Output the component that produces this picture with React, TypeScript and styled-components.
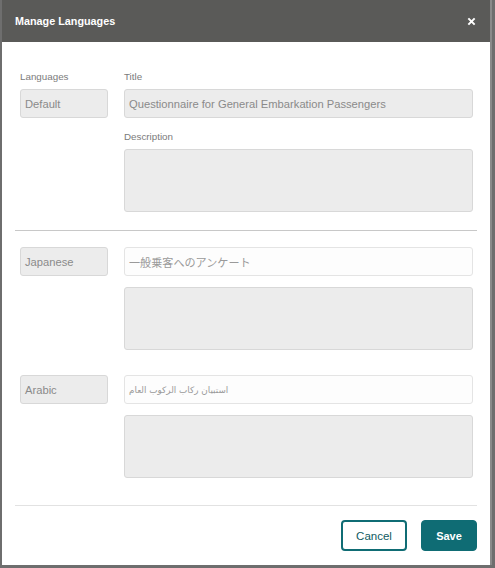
import styled, { createGlobalStyle } from "styled-components";

const GlobalStyle = createGlobalStyle`
  html, body {
    margin: 0;
    padding: 0;
    background: #6e6e6e;
    font-family: "Liberation Sans", Arial, "Noto Sans CJK JP", sans-serif;
  }
`;

interface Translation {
  language: string;
  title: string;
  rtl?: boolean;
}

const translations: Translation[] = [
  { language: "Japanese", title: "一般乗客へのアンケート" },
  { language: "Arabic", title: "استبيان ركاب الركوب العام", rtl: true },
];

const Modal = styled.div`
  width: 488px;
  height: 565px;
  margin-left: 2px;
  background: #fff;
  border-right: 2px solid #8a8a8a;
  display: flex;
  flex-direction: column;
`;

const Header = styled.div`
  height: 42px;
  flex-shrink: 0;
  background: #5a5a58;
  display: flex;
  align-items: center;
  justify-content: space-between;
  padding: 0 14px 0 13px;
  color: #fff;
`;

const HeaderTitle = styled.h2`
  margin: 0;
  font-size: 10.8px;
  font-weight: bold;
`;

const CloseButton = styled.button`
  border: none;
  background: none;
  color: #fff;
  padding: 0;
  display: flex;
  cursor: pointer;
`;

const Body = styled.div`
  padding: 29px 13px 0 13px;
  flex: 1;
`;

const LanguageRow = styled.div<{ $first?: boolean }>`
  display: grid;
  grid-template-columns: 88px 349px;
  column-gap: 16px;
  padding: ${({ $first }) => ($first ? "0 0 18px 5px" : "0 0 25px 5px")};
`;

const Section = styled.div`
  display: flex;
  flex-direction: column;
`;

const Label = styled.label<{ $top?: number }>`
  font-size: 9.8px;
  color: #7b7b7b;
  margin-top: ${({ $top }) => $top ?? 0}px;
  margin-bottom: 7px;
  line-height: 11px;
`;

const Field = styled.div<{ $editable?: boolean }>`
  box-sizing: border-box;
  height: 29px;
  border: 1px solid ${({ $editable }) => ($editable ? "#e4e4e4" : "#d8d8d8")};
  border-radius: 3px;
  background: ${({ $editable }) => ($editable ? "#fdfdfd" : "#ececec")};
  color: #8a8a8a;
  font-size: 11.2px;
  display: flex;
  align-items: center;
  padding: 0 4px;
  white-space: nowrap;
  overflow: hidden;
`;

const ArabicText = styled.span`
  font-family: "DejaVu Sans", "Noto Sans", sans-serif;
  font-size: 8.8px;
  color: #9a9a9a;
`;

const JapaneseText = styled.span`
  font-family: "Noto Sans CJK JP", sans-serif;
  font-size: 11.1px;
  color: #9a9a9a;
`;

const TextArea = styled.div<{ $gap: number }>`
  box-sizing: border-box;
  height: 63px;
  margin-top: ${({ $gap }) => $gap}px;
  border: 1px solid #d8d8d8;
  border-radius: 3px;
  background: #ececec;
`;

const Divider = styled.hr<{ $light?: boolean }>`
  border: none;
  border-top: 1px solid ${({ $light }) => ($light ? "#e2e2e2" : "#c8c8c8")};
  margin: ${({ $light }) => ($light ? "2px 0 0 0" : "0 0 16px 0")};
`;

const Footer = styled.div`
  display: flex;
  justify-content: flex-end;
  gap: 14px;
  padding-top: 14px;
`;

const Button = styled.button<{ $primary?: boolean }>`
  box-sizing: border-box;
  height: 31px;
  border-radius: 4px;
  border: ${({ $primary }) => ($primary ? "1px" : "2px")} solid #0f6c74;
  background: ${({ $primary }) => ($primary ? "#0f6c74" : "#fff")};
  color: ${({ $primary }) => ($primary ? "#fff" : "#0f5a62")};
  font-family: "Liberation Sans", Arial, sans-serif;
  font-size: ${({ $primary }) => ($primary ? "11px" : "11.5px")};
  font-weight: ${({ $primary }) => ($primary ? "bold" : "normal")};
  padding: 0;
  width: ${({ $primary }) => ($primary ? "56px" : "66px")};
  cursor: pointer;
`;

export default function App() {
  return (
    <>
      <GlobalStyle />
      <Modal>
        <Header>
          <HeaderTitle>Manage Languages</HeaderTitle>
          <CloseButton aria-label="Close">
            <svg width="9" height="9" viewBox="0 0 10 10">
              <path d="M1.5 1.5 L8.5 8.5 M8.5 1.5 L1.5 8.5" stroke="#fff" strokeWidth="2.2" />
            </svg>
          </CloseButton>
        </Header>
        <Body>
          <LanguageRow $first>
            <Section>
              <Label>Languages</Label>
              <Field>Default</Field>
            </Section>
            <Section>
              <Label>Title</Label>
              <Field>Questionnaire for General Embarkation Passengers</Field>
              <Label $top={13}>Description</Label>
              <TextArea $gap={0} />
            </Section>
          </LanguageRow>
          <Divider />
          {translations.map((t) => (
            <LanguageRow key={t.language}>
              <Section>
                <Field>{t.language}</Field>
              </Section>
              <Section>
                <Field $editable>
                  {t.rtl ? <ArabicText dir="rtl">{t.title}</ArabicText> : <JapaneseText>{t.title}</JapaneseText>}
                </Field>
                <TextArea $gap={11} />
              </Section>
            </LanguageRow>
          ))}
          <Divider $light />
          <Footer>
            <Button>Cancel</Button>
            <Button $primary>Save</Button>
          </Footer>
        </Body>
      </Modal>
    </>
  );
}
